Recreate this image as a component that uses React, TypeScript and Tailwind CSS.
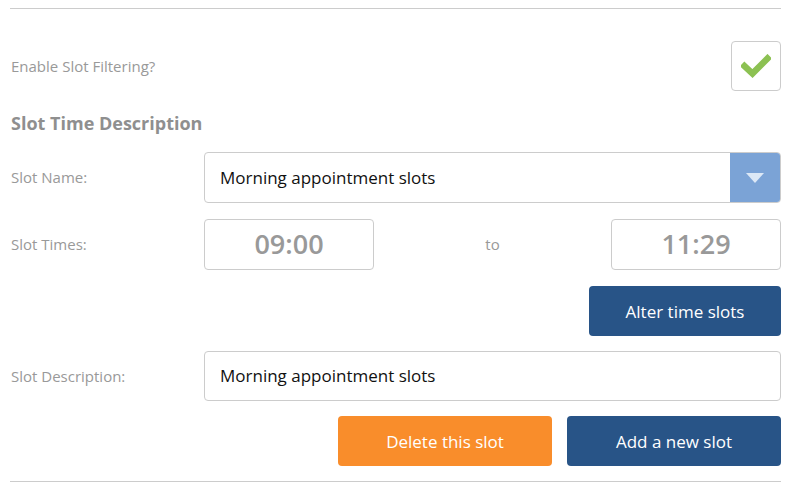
import React from "react";

const font = { fontFamily: '"Open Sans", "Noto Sans", sans-serif' };

export default function App() {
  return (
    <div className="w-[791px] h-[492px] bg-white overflow-hidden" style={font}>
      <div className="ml-[10px] w-[771px] pt-[8px]">
        <div className="border-t border-[#cccccc]" />

        {/* Enable filter */}
        <div className="flex items-center justify-between mt-[32px] h-[50px]">
          <div className="pl-px text-[15px] text-[#999999]">Enable Slot Filtering?</div>
          <button className="w-[50px] h-[50px] rounded-[4px] border border-[#cccccc] bg-white flex items-center justify-center">
            <svg width="30" height="24" viewBox="0 0 30 24">
              <path d="M3.5 12 L11.5 19.5 L26.5 4.5" fill="none" stroke="#8cc152" strokeWidth="6.5" strokeLinecap="square" />
            </svg>
          </button>
        </div>

        <h2 className="mt-[20px] pl-px text-[18px] font-bold text-[#8f8f8f] leading-[24px]">Slot Time Description</h2>

        {/* Slot name */}
        <div className="flex items-center mt-[17px]">
          <div className="w-[194px] pl-px text-[15px] text-[#999999]">Slot Name:</div>
          <div className="flex-1 h-[51px] flex border border-[#cccccc] rounded-[4px] overflow-hidden">
            <div className="flex-1 flex items-center pl-[15px] text-[17px] text-[#111111]">Morning appointment slots</div>
            <div className="w-[50px] bg-[#7ba3d6] flex items-center justify-center">
              <svg width="18" height="10" viewBox="0 0 18 10">
                <path d="M0 0 H18 L9 10 Z" fill="#dce8f6" />
              </svg>
            </div>
          </div>
        </div>

        {/* Slot times */}
        <div className="flex items-center mt-[16px]">
          <div className="w-[194px] pl-px text-[15px] text-[#999999]">Slot Times:</div>
          <div className="w-[170px] h-[51px] border border-[#cccccc] rounded-[4px] flex items-center justify-center text-[27px] font-semibold text-[#999999]">09:00</div>
          <div className="flex-1 text-center text-[15px] text-[#999999]">to</div>
          <div className="w-[170px] h-[51px] border border-[#cccccc] rounded-[4px] flex items-center justify-center text-[27px] font-semibold text-[#999999]">11:29</div>
        </div>

        <div className="flex justify-end mt-[16px]">
          <button className="w-[192px] h-[50px] rounded-[4px] bg-[#285487] text-white text-[17px] pt-px">Alter time slots</button>
        </div>

        {/* Slot description */}
        <div className="flex items-center mt-[15px]">
          <div className="w-[194px] pl-px text-[15px] text-[#999999]">Slot Description:</div>
          <div className="flex-1 h-[50px] border border-[#cccccc] rounded-[4px] flex items-center pl-[15px] text-[17px] text-[#111111]">Morning appointment slots</div>
        </div>

        <div className="flex justify-end gap-[15px] mt-[15px]">
          <button className="w-[214px] h-[50px] rounded-[4px] bg-[#f98d2b] text-white text-[17px] pt-px">Delete this slot</button>
          <button className="w-[214px] h-[50px] rounded-[4px] bg-[#285487] text-white text-[17px] pt-px">Add a new slot</button>
        </div>

        <div className="mt-[15px] border-t border-[#cccccc]" />
      </div>
    </div>
  );
}
